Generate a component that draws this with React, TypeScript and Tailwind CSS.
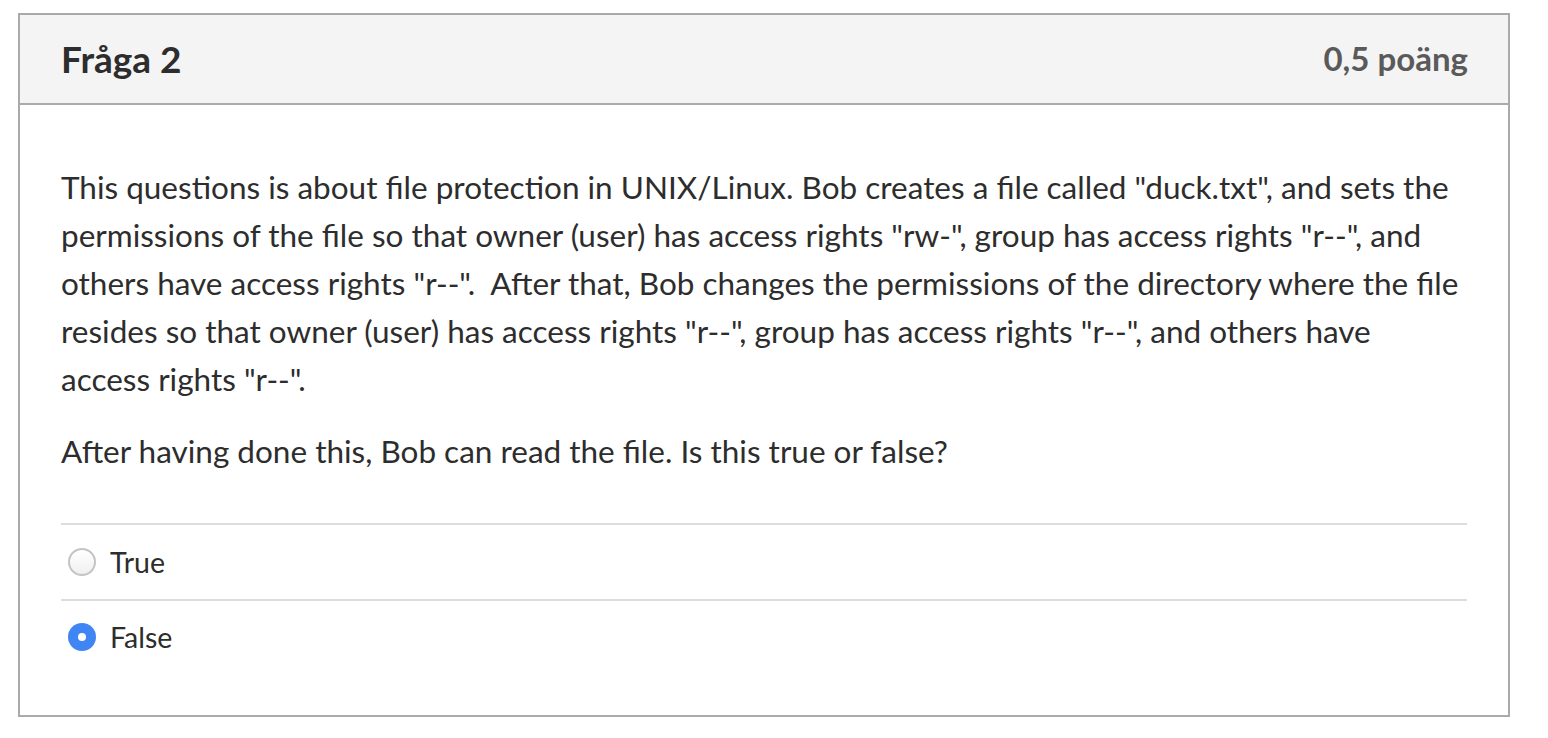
import React from "react";

const paragraph =
  'This questions is about file protection in UNIX/Linux. Bob creates a file called "duck.txt", and sets the permissions of the file so that owner (user) has access rights "rw-", group has access rights "r--", and others have access rights "r--".  After that, Bob changes the permissions of the directory where the file resides so that owner (user) has access rights "r--", group has access rights "r--", and others have access rights "r--".';

const answers = [
  { label: "True", checked: false },
  { label: "False", checked: true },
];

export default function App() {
  return (
    <div className="min-h-[738px] bg-white pt-[13px] pl-[18px]" style={{ fontFamily: "Lato, 'Open Sans', sans-serif" }}>
      <div className="w-[1492px] h-[704px] border-2 border-[#aaaaaa] bg-white flex flex-col">
        <div className="h-[90px] shrink-0 bg-[#f4f4f4] border-b-2 border-[#aaaaaa] flex items-center justify-between pl-[41px] pr-[40px]">
          <h2 className="text-[37px] font-bold text-[#2d2d2d]">Fråga 2</h2>
          <span className="text-[33px] font-bold text-[#5a5a5a]">0,5 poäng</span>
        </div>
        <div className="px-[41px] pt-[58px] text-[#2d2d2d]">
          <p className="text-[31.5px] leading-[48px] whitespace-pre-wrap pr-[6px]">{paragraph}</p>
          <p className="text-[31.5px] leading-[48px] mt-[24px]">After having done this, Bob can read the file. Is this true or false?</p>
          <div className="mt-[48px] border-t-2 border-[#dddddd]">
            {answers.map((a, i) => (
              <div
                key={a.label}
                className={`h-[76px] flex items-center gap-[14px] pl-[7px] ${i === 0 ? "border-b-2 border-[#dddddd]" : "pb-[4px]"}`}
              >
                {a.checked ? (
                  <span className="w-[28px] h-[28px] rounded-full bg-[#3f86f4] flex items-center justify-center">
                    <span className="w-[8px] h-[8px] rounded-full bg-white" />
                  </span>
                ) : (
                  <span className="w-[28px] h-[28px] rounded-full border-2 border-[#c4c4c4] bg-gradient-to-b from-white to-[#f0f0f0]" />
                )}
                <span className="text-[28.5px] text-[#2d2d2d]">{a.label}</span>
              </div>
            ))}
          </div>
        </div>
      </div>
    </div>
  );
}
